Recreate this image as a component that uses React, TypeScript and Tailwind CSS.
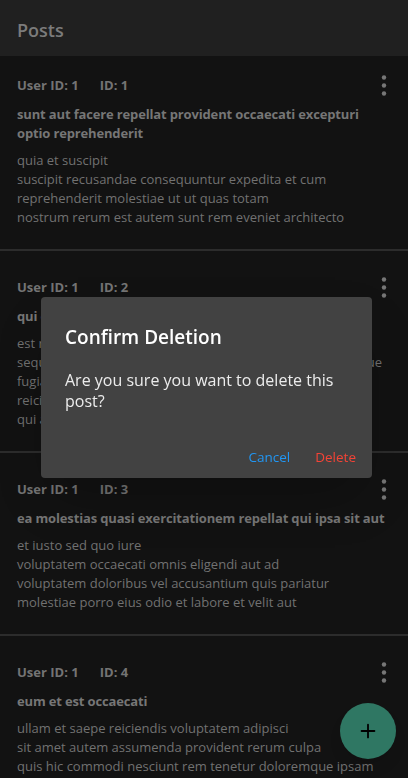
import { Plus } from "lucide-react";

const posts = [
  {
    userId: 1,
    id: 1,
    title: "sunt aut facere repellat provident occaecati excepturi optio reprehenderit",
    body: "quia et suscipit\nsuscipit recusandae consequuntur expedita et cum\nreprehenderit molestiae ut ut quas totam\nnostrum rerum est autem sunt rem eveniet architecto",
  },
  {
    userId: 1,
    id: 2,
    title: "qui est esse",
    body: "est rerum tempore vitae\nsequi sint nihil reprehenderit dolor beatae ea dolores neque\nfugiat blanditiis voluptate porro vel nihil molestiae ut reiciendis\nqui aperiam non debitis possimus qui neque nisi nulla",
  },
  {
    userId: 1,
    id: 3,
    title: "ea molestias quasi exercitationem repellat qui ipsa sit aut",
    body: "et iusto sed quo iure\nvoluptatem occaecati omnis eligendi aut ad\nvoluptatem doloribus vel accusantium quis pariatur\nmolestiae porro eius odio et labore et velit aut",
  },
  {
    userId: 1,
    id: 4,
    title: "eum et est occaecati",
    body: "ullam et saepe reiciendis voluptatem adipisci\nsit amet autem assumenda provident rerum culpa\nquis hic commodi nesciunt rem tenetur doloremque ipsam\niure quis sunt voluptatem rerum illo velit",
  },
];

function Kebab() {
  return (
    <svg width="24" height="24" viewBox="0 0 24 24" className="-mr-[5px] text-[#767676]">
      <circle cx="12" cy="4.5" r="2.2" fill="currentColor" />
      <circle cx="12" cy="12.5" r="2.2" fill="currentColor" />
      <circle cx="12" cy="20.5" r="2.2" fill="currentColor" />
    </svg>
  );
}

export default function App() {
  return (
    <div className="min-h-screen bg-[#121212] font-['Open_Sans',sans-serif]">
      {/* Header */}
      <header className="h-14 bg-[#202020] flex items-center px-[17px] pt-1">
        <h1 className="text-[18px] font-semibold text-[#7b7b7b]">Posts</h1>
      </header>

      {/* Post list */}
      <div>
        {posts.map((post, i) => (
          <div
            key={post.id}
            className={`px-[17px] pb-[22px] border-b-2 border-[#2c2c2c] ${i === 0 ? "pt-[19px]" : "pt-[26px]"}`}
          >
            <div className="flex items-center justify-between h-5">
              <div className="flex gap-[21px] text-[13px] font-bold text-[#747474] leading-5">
                <span>User ID: {post.userId}</span>
                <span>ID: {post.id}</span>
              </div>
              <Kebab />
            </div>
            <h2 className="mt-[10px] text-[13px] font-bold leading-[19px] tracking-[-0.15px] text-[#767676]">
              {post.title}
            </h2>
            <p className="mt-[8px] text-[13px] leading-[19px] text-[#717171] whitespace-pre-line">{post.body}</p>
          </div>
        ))}
      </div>

      {/* Confirm dialog */}
      <div className="fixed left-[41px] top-[297px] w-[331px] h-[181px] bg-[#424242] rounded-[4px] shadow-2xl flex flex-col">
        <h3 className="pt-[28px] px-6 text-[19px] leading-6 font-semibold text-white">Confirm Deletion</h3>
        <p className="mt-[21px] px-6 text-[16px] leading-[21px] text-[#ececec]">
          Are you sure you want to delete this post?
        </p>
        <div className="mt-auto mb-[11px] flex justify-end gap-[25px] pr-4">
          <button className="text-[13.5px] font-medium leading-5 text-[#2196f3]">Cancel</button>
          <button className="text-[13.5px] font-medium leading-5 text-[#f44336]">Delete</button>
        </div>
      </div>

      {/* FAB */}
      <button className="fixed right-3 bottom-[19px] w-14 h-14 rounded-full bg-[#2f7763] flex items-center justify-center shadow-lg">
        <Plus className="w-[22px] h-[22px] text-black" strokeWidth={2} />
      </button>
    </div>
  );
}
